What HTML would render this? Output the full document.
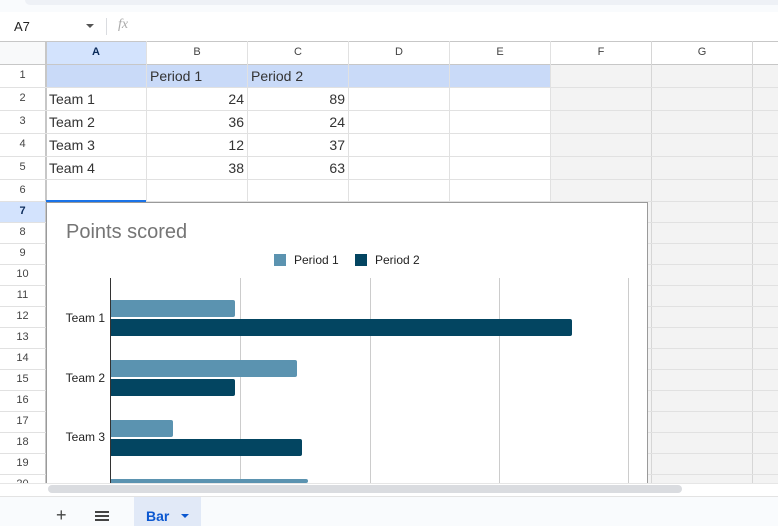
<!DOCTYPE html>
<html><head><meta charset="utf-8"><style>
*{margin:0;padding:0;box-sizing:border-box}
body{width:778px;height:526px;overflow:hidden;background:#fff;font-family:"Liberation Sans",Arial,sans-serif;position:relative}
.a{position:absolute}
.v{position:absolute;width:1px;background:#e1e1e1}
.h{position:absolute;height:1px;background:#e1e1e1}
.ch{position:absolute;top:41px;height:23px;font-size:11px;color:#444;text-align:center;line-height:23px}
.rh{position:absolute;left:0;width:45px;font-size:11px;color:#444;text-align:center}
.c{position:absolute;font-size:14px;color:#333;line-height:22px}
.r{text-align:right}
.bar{position:absolute;left:111px;height:17px;border-radius:0 2px 2px 0}
.p1{background:#5b93b0}.p2{background:#034561}
.tl{position:absolute;font-size:12px;color:#222;width:50px;text-align:right;left:55px}
</style></head><body>
<div class="a" style="left:0;top:0;width:778px;height:12px;background:#f9fbfd"></div>
<div class="a" style="left:25px;top:0;width:760px;height:5px;background:#eef1f6;border-radius:0 0 0 10px"></div>
<div class="a" style="left:14px;top:19px;font-size:13px;color:#222">A7</div>
<div class="a" style="left:86px;top:24px;width:0;height:0;border-left:4px solid transparent;border-right:4px solid transparent;border-top:4px solid #555"></div>
<div class="a" style="left:106px;top:18px;width:1px;height:17px;background:#dadce0"></div>
<div class="a" style="left:118px;top:17px;font-size:14px;color:#aaa;font-style:italic;font-family:'Liberation Serif',serif">fx</div>

<div class="a" style="left:551px;top:65px;width:227px;height:418px;background:#f3f3f3"></div>
<div class="a" style="left:46px;top:65px;width:504px;height:22px;background:#c9daf8"></div>
<div class="a" style="left:46px;top:41px;width:100px;height:23px;background:#d3e3fd"></div>
<div class="a" style="left:0;top:202px;width:45px;height:20px;background:#d3e3fd"></div>
<div class="a" style="left:0;top:41px;width:45px;height:23px;background:#f8f9fa"></div>

<div class="h" style="left:0;top:41px;width:778px;background:#c7c7c7"></div>
<div class="h" style="left:0;top:64px;width:778px;background:#c7c7c7"></div>
<div class="v" style="left:45px;top:41px;height:442px;background:#c7c7c7;width:2px"></div>
<div class="v" style="left:146px;top:41px;height:442px"></div>
<div class="v" style="left:247px;top:41px;height:442px"></div>
<div class="v" style="left:348px;top:41px;height:442px"></div>
<div class="v" style="left:449px;top:41px;height:442px"></div>
<div class="v" style="left:550px;top:41px;height:442px"></div>
<div class="v" style="left:651px;top:41px;height:442px;background:#d6d6d6"></div>
<div class="v" style="left:752px;top:41px;height:442px;background:#d6d6d6"></div>
<div class="h" style="left:0;top:87px;width:778px"></div>
<div class="h" style="left:0;top:110px;width:778px"></div>
<div class="h" style="left:0;top:133px;width:778px"></div>
<div class="h" style="left:0;top:156px;width:778px"></div>
<div class="h" style="left:0;top:179px;width:778px"></div>
<div class="h" style="left:0;top:201px;width:778px"></div>
<div class="h" style="left:0;top:222px;width:778px"></div>
<div class="h" style="left:0;top:243px;width:778px"></div>
<div class="h" style="left:0;top:264px;width:778px"></div>
<div class="h" style="left:0;top:285px;width:778px"></div>
<div class="h" style="left:0;top:306px;width:778px"></div>
<div class="h" style="left:0;top:327px;width:778px"></div>
<div class="h" style="left:0;top:348px;width:778px"></div>
<div class="h" style="left:0;top:369px;width:778px"></div>
<div class="h" style="left:0;top:390px;width:778px"></div>
<div class="h" style="left:0;top:411px;width:778px"></div>
<div class="h" style="left:0;top:432px;width:778px"></div>
<div class="h" style="left:0;top:453px;width:778px"></div>
<div class="h" style="left:0;top:474px;width:778px"></div>
<div class="a" style="left:46px;top:200px;width:100px;height:2px;background:#1a73e8"></div>

<div class="ch" style="left:46px;width:100px;font-weight:bold;color:#0b2b5a">A</div>
<div class="ch" style="left:147px;width:100px">B</div>
<div class="ch" style="left:248px;width:100px">C</div>
<div class="ch" style="left:349px;width:100px">D</div>
<div class="ch" style="left:450px;width:100px">E</div>
<div class="ch" style="left:551px;width:100px">F</div>
<div class="ch" style="left:652px;width:100px">G</div>

<div class="rh" style="top:69px">1</div>
<div class="rh" style="top:92px">2</div>
<div class="rh" style="top:115px">3</div>
<div class="rh" style="top:138px">4</div>
<div class="rh" style="top:161px">5</div>
<div class="rh" style="top:184px">6</div>
<div class="rh" style="top:205px;font-weight:bold;color:#0b2b5a">7</div>
<div class="rh" style="top:226px">8</div>
<div class="rh" style="top:247px">9</div>
<div class="rh" style="top:268px">10</div>
<div class="rh" style="top:289px">11</div>
<div class="rh" style="top:310px">12</div>
<div class="rh" style="top:331px">13</div>
<div class="rh" style="top:352px">14</div>
<div class="rh" style="top:373px">15</div>
<div class="rh" style="top:394px">16</div>
<div class="rh" style="top:415px">17</div>
<div class="rh" style="top:436px">18</div>
<div class="rh" style="top:457px">19</div>
<div class="rh" style="top:478px;height:5px;overflow:hidden">20</div>

<div class="c" style="left:150px;top:65px">Period 1</div>
<div class="c" style="left:251px;top:65px">Period 2</div>
<div class="c" style="left:49px;top:88px">Team 1</div>
<div class="c" style="left:49px;top:111px">Team 2</div>
<div class="c" style="left:49px;top:134px">Team 3</div>
<div class="c" style="left:49px;top:157px">Team 4</div>
<div class="c r" style="left:147px;width:97px;top:88px">24</div>
<div class="c r" style="left:147px;width:97px;top:111px">36</div>
<div class="c r" style="left:147px;width:97px;top:134px">12</div>
<div class="c r" style="left:147px;width:97px;top:157px">38</div>
<div class="c r" style="left:248px;width:97px;top:88px">89</div>
<div class="c r" style="left:248px;width:97px;top:111px">24</div>
<div class="c r" style="left:248px;width:97px;top:134px">37</div>
<div class="c r" style="left:248px;width:97px;top:157px">63</div>

<div class="a" style="left:46px;top:202px;width:602px;height:281px;background:#fff;border:1px solid #9a9a9a;border-bottom:none"></div>
<div class="a" style="left:66px;top:221px;font-size:20px;color:#757575">Points scored</div>
<div class="a" style="left:274px;top:254px;width:12px;height:12px;background:#5b93b0"></div>
<div class="a" style="left:294px;top:253px;font-size:12px;color:#222">Period 1</div>
<div class="a" style="left:355px;top:254px;width:12px;height:12px;background:#034561"></div>
<div class="a" style="left:375px;top:253px;font-size:12px;color:#222">Period 2</div>
<div class="a" style="left:240px;top:278px;width:1px;height:205px;background:#ccc"></div>
<div class="a" style="left:370px;top:278px;width:1px;height:205px;background:#ccc"></div>
<div class="a" style="left:499px;top:278px;width:1px;height:205px;background:#ccc"></div>
<div class="a" style="left:628px;top:278px;width:1px;height:205px;background:#ccc"></div>
<div class="bar p1" style="top:300px;width:124px"></div>
<div class="bar p2" style="top:319px;width:461px"></div>
<div class="bar p1" style="top:360px;width:186px"></div>
<div class="bar p2" style="top:379px;width:124px"></div>
<div class="bar p1" style="top:420px;width:62px"></div>
<div class="bar p2" style="top:439px;width:191px"></div>
<div class="bar p1" style="top:479px;width:197px;height:4px"></div>
<div class="a" style="left:110px;top:278px;width:1px;height:205px;background:#333"></div>
<div class="tl" style="top:311px">Team 1</div>
<div class="tl" style="top:371px">Team 2</div>
<div class="tl" style="top:430px">Team 3</div>

<div class="a" style="left:0;top:483px;width:778px;height:14px;background:#fff;border-top:1px solid #e6e6e6"></div>
<div class="a" style="left:48px;top:485px;width:634px;height:8px;background:#dadce0;border-radius:4px"></div>
<div class="a" style="left:0;top:496px;width:778px;height:1px;background:#e3e3e3"></div>
<div class="a" style="left:0;top:497px;width:778px;height:29px;background:#f9fbfd"></div>
<div class="a" style="left:56px;top:505px;font-size:18px;color:#444">+</div>
<div class="a" style="left:95px;top:511px;width:14px;height:2px;background:#444;box-shadow:0 4px 0 #444,0 8px 0 #444"></div>
<div class="a" style="left:134px;top:497px;width:67px;height:29px;background:#e1e9f7"></div>
<div class="a" style="left:146px;top:508px;font-size:14px;font-weight:bold;color:#0b57d0">Bar</div>
<div class="a" style="left:181px;top:514px;width:0;height:0;border-left:4px solid transparent;border-right:4px solid transparent;border-top:4px solid #0b57d0"></div>
</body></html>
